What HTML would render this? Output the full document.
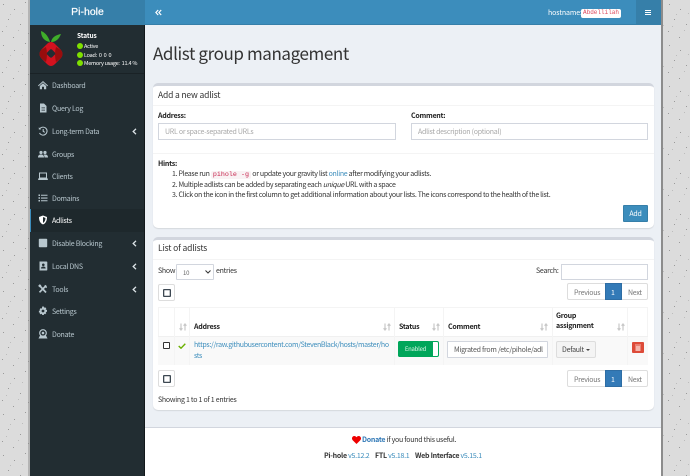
<!DOCTYPE html>
<html><head><meta charset="utf-8"><style>
*{box-sizing:border-box}
html,body{margin:0;padding:0;width:690px;height:476px;overflow:hidden;background:#dcdcdc}
body{position:relative;font-family:"Noto Sans CJK JP","Liberation Sans",sans-serif;font-size:7px;letter-spacing:-.25px;color:#333}
.a{position:absolute}
.t{position:absolute;white-space:nowrap;line-height:12px;margin-top:1px}
.m{font-family:"Liberation Mono",monospace;letter-spacing:0}
.s{color:#b8c7ce;left:52px}
.i{position:absolute;left:38px;width:10px;height:10px}
.ar{position:absolute;left:132px;width:5px;height:7px}
.box{position:absolute;left:153px;width:501px;background:#fff;border-top:3px solid #d2d6de;border-radius:5px;box-shadow:0 1px 1px rgba(0,0,0,.1)}
.inp{position:absolute;background:#fff;border:1px solid #d2d6de}
.ph{color:#a8a8a8}
.b{font-weight:700;color:#222}
.ln{color:#3c8dbc}
.sq{position:absolute;width:17px;height:17px;border:1px solid #ddd;border-radius:2px;background:#fff}
.sq i{position:absolute;left:4px;top:4px;width:8px;height:8px;border:1px solid #3d4852;border-radius:1px;box-shadow:inset 0 0 0 .3px #3d4852}
.pg{position:absolute;left:567px;width:81px;height:17px;border:1px solid #ddd;border-radius:2px;background:#fff}
.pg b{position:absolute;left:37px;top:-1px;width:17px;height:17px;background:#337ab7;border:1px solid #2e6da4}
.pg span{position:absolute;top:3px;line-height:12px;color:#777;white-space:nowrap}
.sort{position:absolute;width:8px;height:8px}
.vl{position:absolute;top:307px;width:1px;height:58px;background:#f4f4f4}
.h{font-size:8.5px;letter-spacing:-.15px}
</style></head><body>
<svg class="a" style="left:0;top:0" width="690" height="476"><defs><pattern id="p" width="37" height="41" patternUnits="userSpaceOnUse"><rect width="37" height="41" fill="#dcdcdc"/><g fill="#9a9a9a"><rect x="3" y="4" width="1" height="1"/><rect x="14" y="9" width="1" height="1"/><rect x="25" y="2" width="1" height="1"/><rect x="31" y="15" width="1" height="1"/><rect x="8" y="19" width="1" height="1"/><rect x="20" y="24" width="1" height="1"/><rect x="2" y="31" width="1" height="1"/><rect x="28" y="33" width="1" height="1"/><rect x="13" y="37" width="1" height="1"/></g><g fill="#bcbcbc"><rect x="10" y="14" width="1" height="1"/><rect x="34" y="25" width="1" height="1"/><rect x="18" y="30" width="1" height="1"/><rect x="6" y="26" width="1" height="1"/><rect x="22" y="13" width="1" height="1"/></g></pattern></defs><rect width="690" height="476" fill="url(#p)"/></svg>
<div class="a" style="left:28px;top:0;width:2px;height:476px;background:#8c8c8c;opacity:.5"></div>
<div class="a" style="left:661px;top:0;width:2px;height:476px;background:#8c8c8c"></div>

<!-- sidebar -->
<div class="a" style="left:30px;top:0;width:115px;height:476px;background:#222d32;border-right:1px solid #12181b"></div>
<div class="a" style="left:30px;top:0;width:115px;height:25px;background:#367fa9"></div>
<div class="t" style="left:30px;width:115px;text-align:center;top:5px;color:#fff;font-size:10.500px;letter-spacing:0;font-family:'Liberation Sans',sans-serif;-webkit-text-stroke:.2px #fff">Pi-hole</div>
<div class="a" style="left:30px;top:73px;width:114px;height:1px;background:#1a2226"></div>
<svg class="a" style="left:39px;top:29px" width="24" height="40" viewBox="0 0 24 40">
<path d="M11 13C9 6 5 3 2 2 2 8 5 12 11 13Z" fill="#3fae2a"/><path d="M12 13C13 8 17 6 22 5 20 10 17 13 12 13Z" fill="#3fae2a"/>
<path d="M12 13 Q14 13 16 15L22 21Q25 25 22 29L16 35Q12 39 8 35L2 29Q-1 25 2 21L8 15Q10 13 12 13Z" fill="#d3121f"/>
<path d="M2 21Q-1 25 2 29L7 33 Q9 25 7 18Z" fill="#980d0d"/><path d="M22 21Q25 25 22 29L17 33Q15 25 17 18Z" fill="#980d0d"/>
<rect x="8.5" y="21" width="7" height="7" rx="2" transform="rotate(45 12 24.500)" fill="#222d32"/>
</svg>
<div class="t b" style="left:77px;top:28px;color:#fff;font-size:6.500px;letter-spacing:-.1px">Status</div>
<div class="a" style="left:77px;top:43px;width:6px;height:6px;border-radius:3px;background:#7fe000"></div>
<div class="a" style="left:77px;top:52px;width:6px;height:6px;border-radius:3px;background:#7fe000"></div>
<div class="a" style="left:77px;top:60px;width:6px;height:6px;border-radius:3px;background:#7fe000"></div>
<div class="t" style="left:84px;top:39px;color:#fff;font-size:5.500px">Active</div>
<div class="t" style="left:84px;top:48px;color:#fff;font-size:5.500px">Load:&nbsp; 0&nbsp; 0&nbsp; 0</div>
<div class="t" style="left:84px;top:56px;color:#fff;font-size:5.500px">Memory usage:&nbsp; 11.4 %</div>

<div class="a" style="left:30px;top:209px;width:114px;height:23px;background:#1e282c;border-left:1px solid #3c8dbc"></div>
<div class="t s" style="top:79px">Dashboard</div>
<div class="t s" style="top:102px">Query Log</div>
<div class="t s" style="top:125px">Long-term Data</div>
<div class="t s" style="top:148px">Groups</div>
<div class="t s" style="top:170px">Clients</div>
<div class="t s" style="top:192px">Domains</div>
<div class="t s" style="top:214px;color:#fff">Adlists</div>
<div class="t s" style="top:237px">Disable Blocking</div>
<div class="t s" style="top:260px">Local DNS</div>
<div class="t s" style="top:283px">Tools</div>
<div class="t s" style="top:305px">Settings</div>
<div class="t s" style="top:328px">Donate</div>

<svg class="i" style="top:80px" viewBox="0 0 10 10" fill="#b8c7ce"><path d="M0 5.500 5 1l5 4.500-.6.700L5 2.400.6 6.200Z"/><path d="M1.800 6 5 3.200 8.200 6v3.200H6V6.800H4v2.400H1.800Z"/></svg>
<svg class="i" style="top:103px" viewBox="0 0 10 10"><path d="M2 .500h4l2.500 2.500v6.500H2Z" fill="#b8c7ce"/><path d="M3.500 4.500h3.500M3.500 6h3.500M3.500 7.500h3.500" stroke="#222d32" stroke-width=".6"/></svg>
<svg class="i" style="top:126px" viewBox="0 0 10 10" fill="none" stroke="#b8c7ce" stroke-width="1.100"><path d="M2 2.500A4 4 0 1 1 1.500 7"/><path d="M5.200 3v2.300l1.600 1"/><path d="M.8 1.200v2.300h2.300" fill="#b8c7ce" stroke="none"/></svg>
<svg class="i" style="top:149px" viewBox="0 0 10 10" fill="#b8c7ce"><circle cx="3" cy="3.500" r="1.600"/><circle cx="7" cy="3.500" r="1.600"/><path d="M0 8.500C0 6 1.500 5.500 3 5.500s3 .5 3 3ZM6.500 8.500c0-1.200-.3-2.200-1-2.800.5-.2 1-.2 1.500-.2 1.500 0 3 .5 3 3Z"/></svg>
<svg class="i" style="top:171px" viewBox="0 0 10 10"><path d="M1.500 2h7v5h-7Z" fill="none" stroke="#b8c7ce"/><path d="M0 7.500h10v.8q0 .7-.7.7H.7q-.7 0-.7-.7Z" fill="#b8c7ce"/></svg>
<svg class="i" style="top:193px" viewBox="0 0 10 10" fill="#b8c7ce"><path d="M.5 1.500h1.500V3H.5ZM.5 4.300h1.500v1.500H.5ZM.5 7h1.500v1.500H.5ZM3 1.700h6.500v1.100H3ZM3 4.500h6.500v1.100H3ZM3 7.200h6.500v1.100H3Z"/></svg>
<svg class="i" style="top:215px" viewBox="0 0 10 10"><path d="M5 .5 9 2c0 4-1.500 6.500-4 7.500C2.500 8.500 1 6 1 2Z" fill="#fff"/><path d="M5 2 7.500 3C7.400 5.500 6.500 7 5 8Z" fill="#1e282c"/></svg>
<svg class="i" style="top:238px" viewBox="0 0 10 10"><rect x=".8" y=".8" width="8.400" height="8.400" rx=".8" fill="#b8c7ce"/></svg>
<svg class="i" style="top:261px" viewBox="0 0 10 10"><path d="M1.500.5h7q.8 0 .8.800v7.400q0 .8-.8.800h-7Z" fill="#b8c7ce"/><circle cx="5.300" cy="3.800" r="1.300" fill="#222d32"/><path d="M3 7.500c0-1.500 1-2 2.300-2s2.300.5 2.300 2Z" fill="#222d32"/></svg>
<svg class="i" style="top:284px" viewBox="0 0 10 10" fill="none" stroke="#b8c7ce" stroke-width="1.700"><path d="M2 2 8 8.500"/><path d="M8.200 1.500 1.500 8.300"/><path d="M1 1l1.500 1.500" stroke-width="2.500"/><path d="M7.300 1.200a1.900 1.900 0 0 0 1.500 2.200" stroke-width="1.400"/></svg>
<svg class="i" style="top:306px" viewBox="0 0 10 10"><path d="M4.200.5h1.600l.3 1.300 1-.5 1.200 1.200-.6 1.100 1.300.3v1.800l-1.300.3.600 1.100-1.200 1.200-1-.6-.3 1.300H4.200l-.3-1.300-1.100.6L1.600 7.900l.6-1.100L.9 6.500V4.700l1.300-.3-.6-1.100 1.200-1.200 1.100.5Z" fill="#b8c7ce"/><circle cx="5" cy="5" r="1.400" fill="#222d32"/></svg>
<svg class="i" style="top:329px" viewBox="0 0 10 10"><circle cx="5" cy="4" r="3.300" fill="none" stroke="#b8c7ce" stroke-width="1.200"/><path d="M.5 9.500 2 6.500h6l1.500 3Z" fill="#b8c7ce"/><circle cx="5" cy="4" r="1.300" fill="#b8c7ce"/></svg>

<svg class="ar" style="top:128px" viewBox="0 0 5 7"><path d="M4 .8 1.200 3.500 4 6.200" fill="none" stroke="#dfe6ea" stroke-width="1.300"/></svg>
<svg class="ar" style="top:240px" viewBox="0 0 5 7"><path d="M4 .8 1.200 3.500 4 6.200" fill="none" stroke="#dfe6ea" stroke-width="1.300"/></svg>
<svg class="ar" style="top:263px" viewBox="0 0 5 7"><path d="M4 .8 1.200 3.500 4 6.200" fill="none" stroke="#dfe6ea" stroke-width="1.300"/></svg>
<svg class="ar" style="top:286px" viewBox="0 0 5 7"><path d="M4 .8 1.200 3.500 4 6.200" fill="none" stroke="#dfe6ea" stroke-width="1.300"/></svg>

<!-- navbar -->
<div class="a" style="left:145px;top:0;width:516px;height:25px;background:#3c8dbc;border-bottom:1px solid #367fa9"></div>
<div class="a" style="left:636px;top:0;width:25px;height:25px;background:#367fa9"></div>
<svg class="a" style="left:155px;top:9px" width="7" height="7" viewBox="0 0 7 7"><path d="M3.200 1 .9 3.500 3.200 6M6.200 1 3.900 3.500 6.200 6" fill="none" stroke="#fff" stroke-width="1.200"/></svg>
<div class="a" style="left:645px;top:10px;width:6px;height:1px;background:#fff;box-shadow:0 2px 0 #fff,0 4px 0 #fff"></div>
<div class="t" style="left:548px;top:6px;color:#fff;letter-spacing:-.1px">hostname:</div>
<div class="a" style="left:581px;top:9px;width:40px;height:9px;background:#fff;border-radius:2px"></div>
<div class="t m" style="left:583px;top:6px;color:#dd4b5f;font-size:6px">Abdellilah</div>

<!-- content -->
<div class="a" style="left:145px;top:25px;width:516px;height:403px;background:#ecf0f5"></div>
<div class="t" style="left:153px;top:40px;font-size:17px;letter-spacing:-.4px;line-height:24px;color:#333">Adlist group management</div>

<div class="box" style="top:83px;height:145px"></div>
<div class="t h" style="left:158px;top:88px">Add a new adlist</div>
<div class="a" style="left:153px;top:105px;width:501px;height:1px;background:#f4f4f4"></div>
<div class="t b" style="left:158px;top:109px">Address:</div>
<div class="inp" style="left:158px;top:123px;width:238px;height:17px"></div>
<div class="t ph" style="left:165px;top:125px">URL or space-separated URLs</div>
<div class="t b" style="left:411px;top:109px">Comment:</div>
<div class="inp" style="left:411px;top:123px;width:237px;height:17px"></div>
<div class="t ph" style="left:418px;top:125px">Adlist description (optional)</div>
<div class="a" style="left:153px;top:153px;width:501px;height:1px;background:#f4f4f4"></div>
<div class="t b" style="left:158px;top:157px">Hints:</div>
<div class="t" style="left:172px;top:167px;letter-spacing:-.3px">1. Please run <span class="m" style="background:#f9f2f4;color:#c7254e;padding:0 2px;font-size:6.700px;border-radius:2px">pihole -g</span> or update your gravity list <span class="ln">online</span> after modifying your adlists.</div>
<div class="t" style="left:172px;top:178px;letter-spacing:-.3px">2. Multiple adlists can be added by separating each <i>unique</i> URL with a space</div>
<div class="t" style="left:172px;top:188px;letter-spacing:-.3px">3. Click on the icon in the first column to get additional information about your lists. The icons correspond to the health of the list.</div>
<div class="a" style="left:623px;top:205px;width:25px;height:17px;background:#3c8dbc;border:1px solid #367fa9;border-radius:1px"></div>
<div class="t" style="left:623px;width:25px;text-align:center;top:207px;color:#fff">Add</div>

<div class="box" style="top:237px;height:173px"></div>
<div class="t h" style="left:158px;top:241px">List of adlists</div>
<div class="a" style="left:153px;top:259px;width:501px;height:1px;background:#f4f4f4"></div>
<div class="t" style="left:158px;top:264px">Show</div>
<div class="inp" style="left:176px;top:264px;width:38px;height:16px;border-radius:1px"></div>
<div class="t" style="left:183px;top:266px;font-size:6px;color:#666">10</div>
<svg class="a" style="left:205px;top:270px" width="6" height="4" viewBox="0 0 6 4"><path d="M.5.500 3 3 5.500.5" fill="none" stroke="#333" stroke-width="1"/></svg>
<div class="t" style="left:216px;top:264px">entries</div>
<div class="t" style="left:536px;top:264px">Search:</div>
<div class="inp" style="left:561px;top:264px;width:87px;height:16px"></div>
<div class="sq" style="left:158px;top:284px"><i></i></div>
<div class="pg" style="top:283px"><span style="left:6px">Previous</span><b></b><span style="left:43px;color:#fff">1</span><span style="left:60px">Next</span></div>

<div class="a" style="left:158px;top:307px;width:490px;height:58px;border:1px solid #f4f4f4"></div>
<div class="a" style="left:158px;top:336px;width:490px;height:29px;background:#f9f9f9;border-top:1px solid #f0f0f0"></div>
<div class="vl" style="left:174px"></div><div class="vl" style="left:189px"></div><div class="vl" style="left:394px"></div><div class="vl" style="left:443px"></div><div class="vl" style="left:552px"></div><div class="vl" style="left:627px"></div>
<div class="t b" style="left:194px;top:320px">Address</div>
<div class="t b" style="left:399px;top:320px">Status</div>
<div class="t b" style="left:448px;top:320px">Comment</div>
<div class="t b" style="left:556px;top:310px;line-height:10px">Group<br>assignment</div>
<svg width="0" height="0" style="position:absolute"><defs><symbol id="so" viewBox="0 0 8 8"><path d="M2 .5v6M.6 5.200 2 7l1.400-1.800M6 7.500v-6M4.600 2.800 6 1l1.400 1.800" fill="none" stroke="#c8c8c8" stroke-width="1.200"/></symbol></defs></svg>
<svg class="sort" style="left:179px;top:323px"><use href="#so"/></svg>
<svg class="sort" style="left:383px;top:323px"><use href="#so"/></svg>
<svg class="sort" style="left:432px;top:323px"><use href="#so"/></svg>
<svg class="sort" style="left:540px;top:323px"><use href="#so"/></svg>
<svg class="sort" style="left:617px;top:323px"><use href="#so"/></svg>

<div class="a" style="left:163px;top:342px;width:7px;height:7px;border:1.500px solid #333;border-radius:1px;background:#fff"></div>
<svg class="a" style="left:178px;top:343px" width="8" height="6" viewBox="0 0 8 6"><path d="M.7 3 3 5.200 7.300.8" fill="none" stroke="#6ab000" stroke-width="1.400"/></svg>
<div class="t ln" style="left:194px;top:339px;line-height:11px;font-size:7px;letter-spacing:-.32px">https://raw.githubusercontent.com/StevenBlack/hosts/master/ho<br>sts</div>
<div class="a" style="left:398px;top:341px;width:41px;height:16px;border:1px solid #00a65a;border-radius:2px;background:#fff"></div>
<div class="a" style="left:398px;top:341px;width:35px;height:16px;background:#00a65a;border-radius:2px 0 0 2px"></div>
<div class="t" style="left:398px;width:35px;text-align:center;top:342px;color:#d8f5e6;font-size:6px">Enabled</div>
<div class="inp" style="left:447px;top:341px;width:101px;height:17px;border-radius:1px"></div>
<div class="t" style="left:454px;top:343px;width:90px;overflow:hidden;color:#555">Migrated from /etc/pihole/adl</div>
<div class="a" style="left:556px;top:341px;width:40px;height:17px;background:#f4f4f4;border:1px solid #ddd;border-radius:2px"></div>
<div class="t" style="left:562px;top:343px;color:#444">Default</div>
<div class="a" style="left:586px;top:349px;border:2px solid transparent;border-top-color:#444;border-bottom:0"></div>
<div class="a" style="left:632px;top:342px;width:12px;height:11px;background:#dd4b39;border-radius:1px"></div>
<svg class="a" style="left:634px;top:343px" width="8" height="9" viewBox="0 0 8 9"><path d="M1 1.500h6v1H1ZM1.500 3h5v5h-5Z" fill="#f5b5ab"/></svg>

<div class="sq" style="left:158px;top:370px"><i></i></div>
<div class="pg" style="top:370px"><span style="left:6px">Previous</span><b></b><span style="left:43px;color:#fff">1</span><span style="left:60px">Next</span></div>
<div class="t" style="left:158px;top:393px">Showing 1 to 1 of 1 entries</div>

<!-- footer -->
<div class="a" style="left:145px;top:427px;width:516px;height:49px;background:#fff;border-top:1px solid #d2d6de"></div>
<svg class="a" style="left:352px;top:436px" width="9" height="8" viewBox="0 0 9 8"><path d="M4.500 8 .7 4.200C-.9 2.400.4 0 2.300 0c1 0 1.700.5 2.200 1.200C5 .5 5.700 0 6.700 0c1.900 0 3.200 2.400 1.600 4.200Z" fill="#e00"/></svg>
<div class="t" style="left:362px;top:433px"><b class="ln" style="color:#337ab7">Donate</b> if you found this useful.</div>
<div class="t" style="left:324px;top:449px"><b>Pi-hole</b> <span class="ln">v5.12.2</span></div>
<div class="t" style="left:375px;top:449px"><b>FTL</b> <span class="ln">v5.18.1</span></div>
<div class="t" style="left:415px;top:449px"><b>Web Interface</b> <span class="ln">v5.15.1</span></div>
</body></html>
